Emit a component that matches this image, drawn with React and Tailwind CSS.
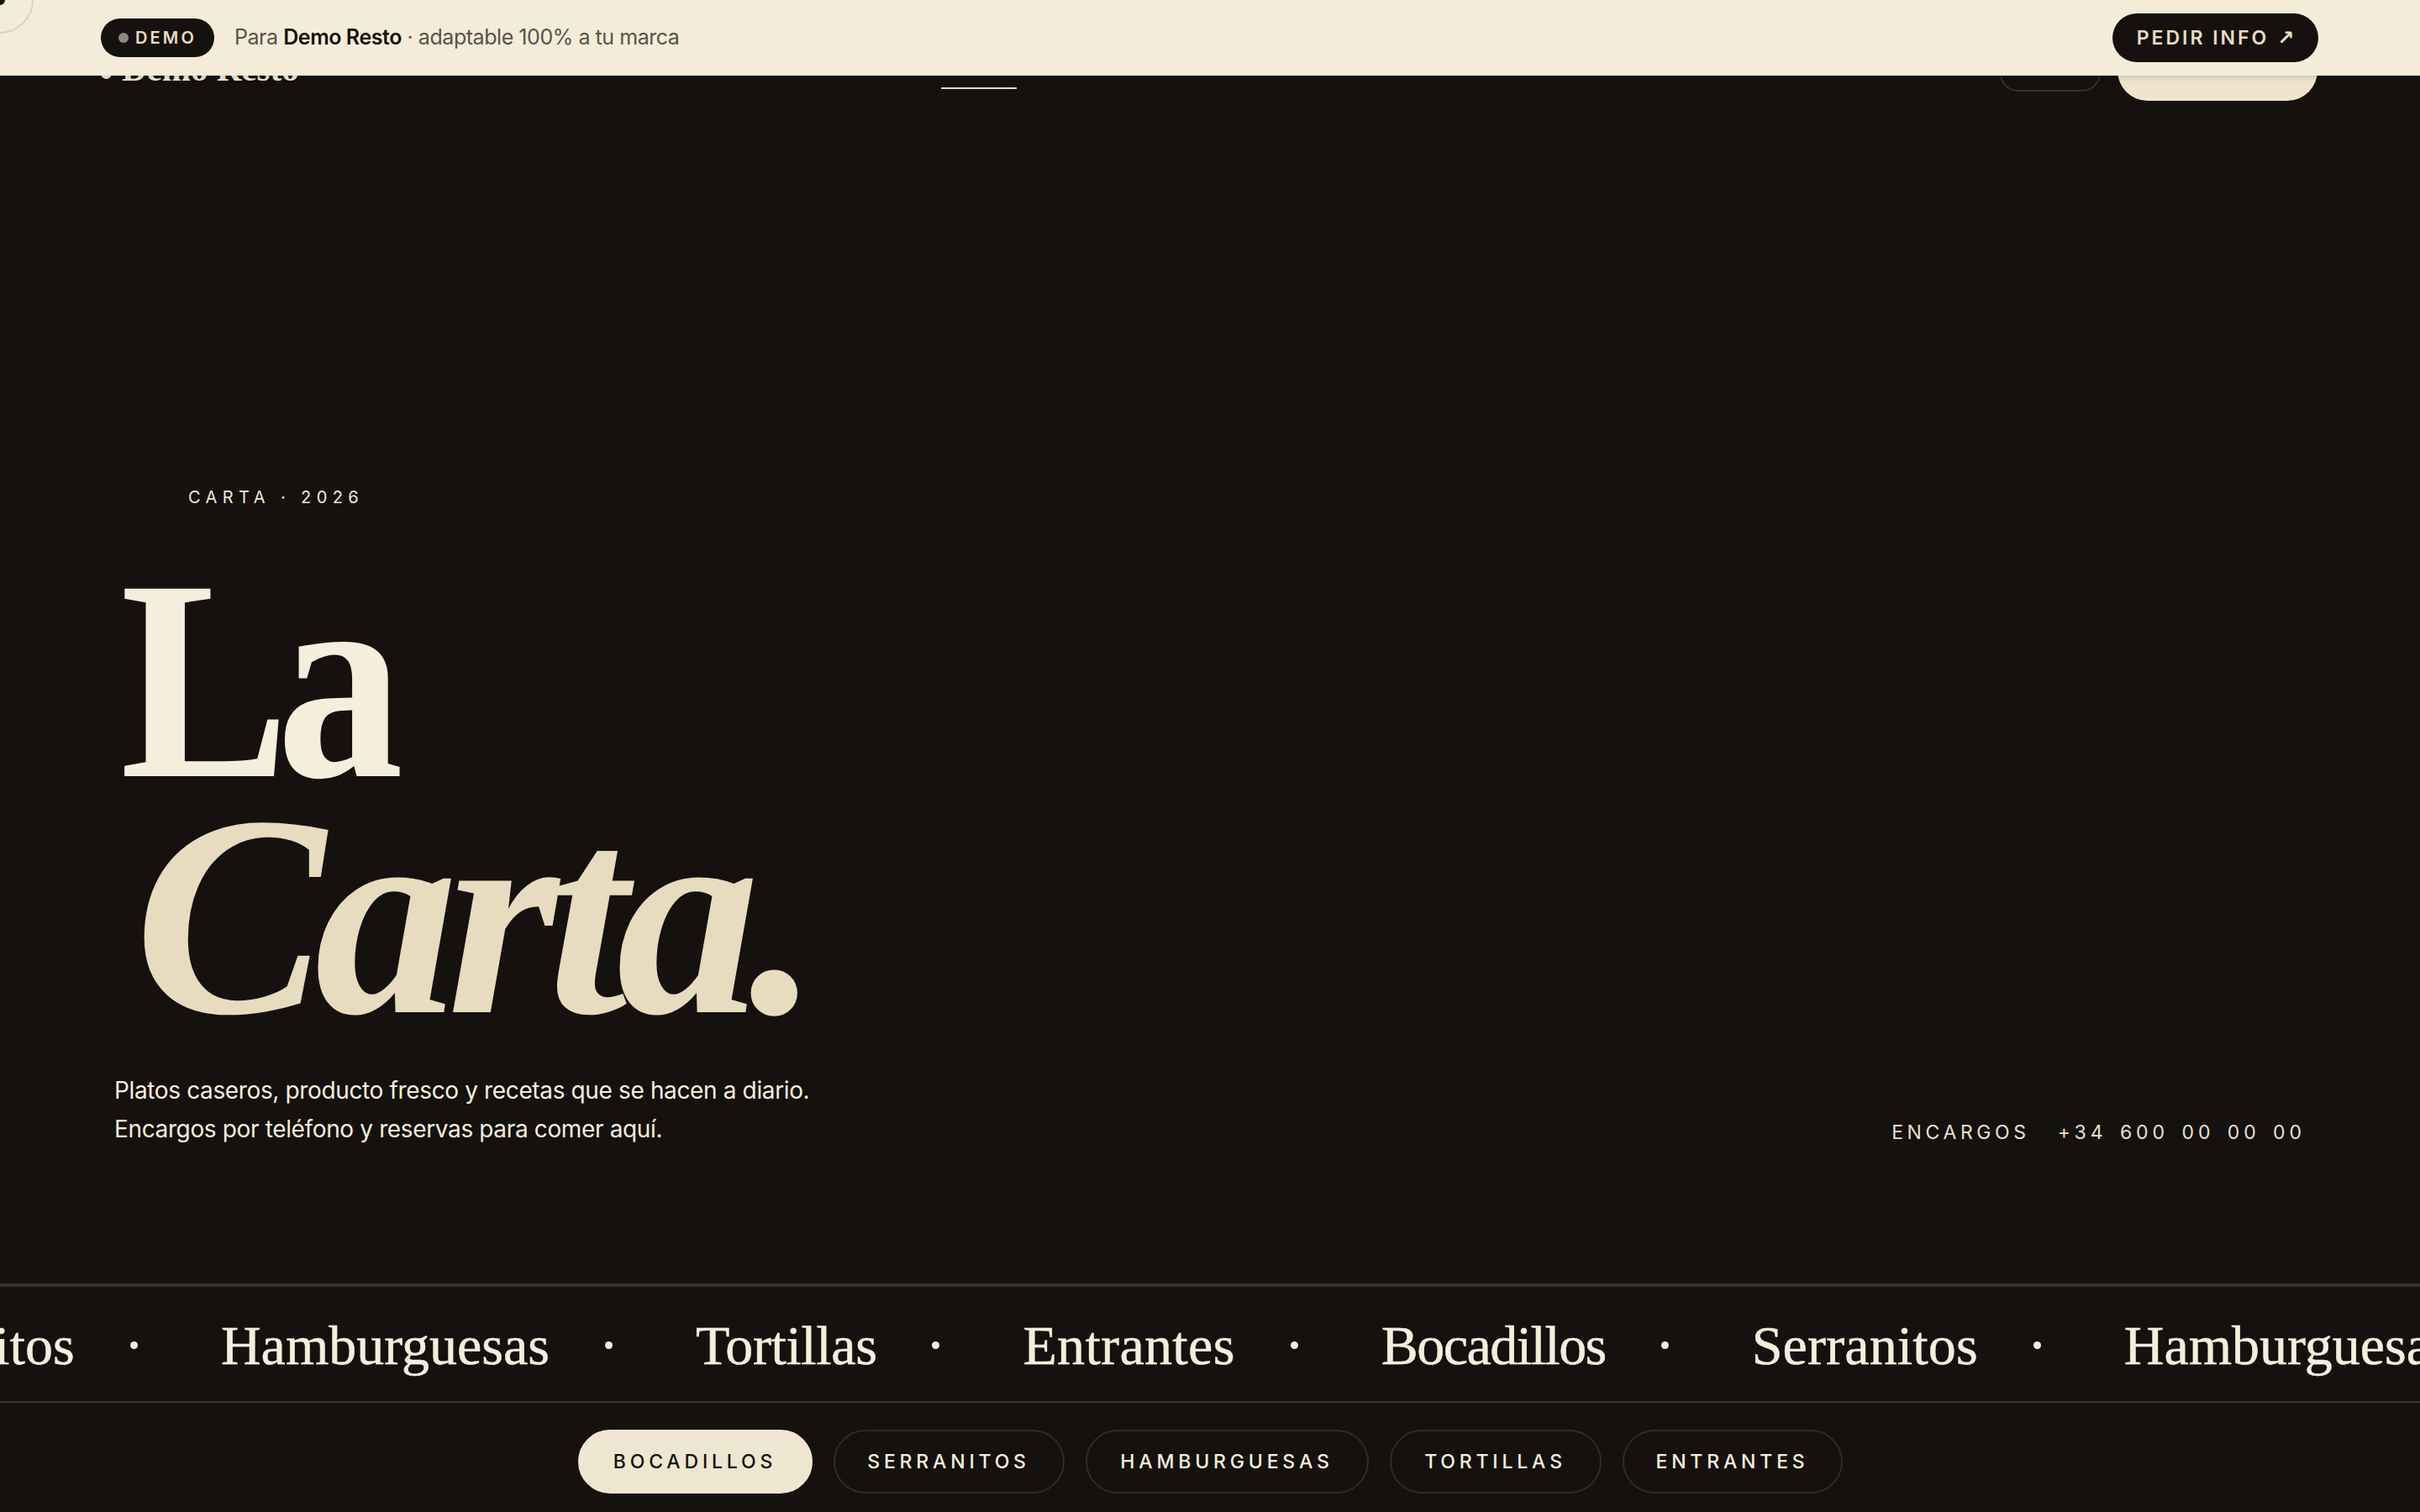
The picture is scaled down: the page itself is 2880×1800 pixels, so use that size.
import React from "react";

const sans = "font-['Inter',sans-serif]";
const serif = "font-['Liberation_Serif',serif]";

const navLinks = [
  { label: "HOY", active: false, box: "w-[32px]" },
  { label: "CARTA", active: true, box: "w-[90px]" },
  { label: "VINOS", active: false, box: "w-[104px]" },
  { label: "RESERVA", active: false, box: "w-[108px]" },
  { label: "CONTACTO", active: false, box: "w-[120px]" },
];

const marqueeWords = [
  { word: "Serranitos", fit: "tracking-[0.002em]" },
  { word: "Hamburguesas", fit: "tracking-normal" },
  { word: "Tortillas", fit: "-tracking-[0.006em]" },
  { word: "Entrantes", fit: "tracking-[0.005em]" },
  { word: "Bocadillos", fit: "-tracking-[0.023em]" },
  { word: "Serranitos", fit: "tracking-[0.002em]" },
  { word: "Hamburguesas", fit: "tracking-normal" },
];

const tabs = [
  { label: "BOCADILLOS", box: "w-[279px]", active: true },
  { label: "SERRANITOS", box: "w-[275px]" },
  { label: "HAMBURGUESAS", box: "w-[337px]" },
  { label: "TORTILLAS", box: "w-[252px]" },
  { label: "ENTRANTES", box: "w-[262px]" },
];

const DemoBar = () => (
  <div className="absolute top-0 left-0 z-10 flex h-[90px] w-full items-center justify-between bg-[#f4ecd9] pl-[120px] pr-[121px] shadow-[0_2px_8px_rgba(0,0,0,0.18)]">
    <div className="flex items-center gap-[24px]">
      <span className="flex h-[46px] w-[135px] items-center justify-center gap-[8px] rounded-[23px] bg-[#15110e]">
        <span className="h-[12px] w-[12px] rounded-full bg-[#8f8a7e]" />
        <span className={`${sans} text-[20px] font-semibold tracking-[0.16em] text-[#e8dcc2]`}>DEMO</span>
      </span>
      <p className={`${sans} text-[25px] tracking-[-0.018em] text-[#57524b]`}>
        Para <strong className="font-semibold text-[#15110e]">Demo Resto</strong> · adaptable 100% a tu marca
      </p>
    </div>
    <button className={`${sans} flex h-[58px] w-[245px] items-center justify-center gap-[10px] rounded-[29px] bg-[#15110e] text-[23px] font-semibold tracking-[0.13em] text-[#e8dcc2]`}>
      PEDIR INFO <span className="font-['DejaVu_Sans',sans-serif] text-[24px] tracking-normal">↗</span>
    </button>
  </div>
);

const Header = () => (
  <header className="flex h-[158px] shrink-0 items-center pl-[120px] pr-[122px]">
    <a className={`${serif} flex items-center gap-[12px] text-[41px] font-bold leading-none text-[#f5eedd]`}>
      <span className="mt-[16px] h-[13px] w-[13px] rounded-full bg-[#f5eedd]" />
      <span className="mt-[6px]">Demo Resto</span>
    </a>
    <nav className={`${sans} ml-[664px] flex gap-[68px] text-[21px] tracking-[0.02em] text-[#d8cfbc]`}>
      {navLinks.map((link) => (
        <a key={link.label} className={`${link.box} relative mt-[8px] whitespace-nowrap`}>
          {link.label}
          {link.active && <span className="absolute -bottom-[7px] left-0 h-[2px] w-full bg-[#e8dcc2]" />}
        </a>
      ))}
    </nav>
    <div className="ml-auto flex items-center gap-[20px]">
      <button className="h-[60px] w-[120px] rounded-[22px] border-2 border-[#35322c]" />
      <button className={`${sans} h-[82px] w-[238px] rounded-[36px] bg-[#efe5cf] pt-[8px] text-[21px] tracking-[0.1em] text-[#15110e]`}>
        PEDIR
      </button>
    </div>
  </header>
);

const Hero = () => (
  <section className="flex flex-1 flex-col justify-end px-[136px] pb-[161px]">
    <p className={`${sans} ml-[88px] text-[20px] tracking-[0.32em] text-[#f0eadb]`}>CARTA · 2026</p>
    <h1 className={`${serif} mt-[62px] -ml-[2px] text-[341px] font-bold leading-[281px] tracking-[-0.05em]`}>
      <span className="ml-[9px] block origin-left scale-x-[0.885] text-[#f5eedd]">La</span>
      <em className="ml-[26px] block tracking-[-0.038em] text-[#e7dbc0]">Carta.</em>
    </h1>
    <div className="mt-[44px] flex items-end justify-between">
      <p className={`${sans} text-[28px] leading-[46px] tracking-[-0.013em] text-[#f5eedd]`}>
        Platos caseros, producto fresco y recetas que se hacen a diario.
        <br />
        Encargos por teléfono y reservas para comer aquí.
      </p>
      <p className={`${sans} -mb-[4px] flex gap-[33px] text-[23px] leading-[46px] tracking-[0.2em] text-[#e8e0ce]`}>
        <span>ENCARGOS</span>
        <span className="tracking-[0.215em] [word-spacing:4px]">+34 600 00 00 00</span>
      </p>
    </div>
  </section>
);

const Marquee = () => (
  <div className="flex h-[142px] shrink-0 items-center overflow-hidden border-t-4 border-b-2 border-t-[#37342c] border-b-[#37342c]">
    <div className={`${serif} -ml-[180px] mt-[3px] flex items-center whitespace-nowrap text-[66px] leading-none text-[#f5eedd] [-webkit-text-stroke:0.5px_#f5eedd]`}>
      {marqueeWords.map((item, i) => (
        <React.Fragment key={i}>
          <span className={item.fit}>{item.word}</span>
          <span className="ml-[66px] mr-[99px] h-[9px] w-[9px] rounded-full bg-[#f5eedd]" />
        </React.Fragment>
      ))}
    </div>
  </div>
);

const Tabs = () => (
  <div className="flex h-[130px] shrink-0 justify-center gap-[25px] pt-[32px]">
    {tabs.map((tab) => (
      <button
        key={tab.label}
        className={`${tab.box} ${sans} h-[76px] rounded-[38px] border-2 text-[23px] font-medium tracking-[0.21em] ${
          tab.active
            ? "border-[#efe6d2] bg-[#efe6d2] text-[#15110e]"
            : "border-[#2f2c27] text-[#f5eedd]"
        }`}
      >
        {tab.label}
      </button>
    ))}
  </div>
);

export default function App() {
  return (
    <div className="relative flex h-[1800px] w-full flex-col overflow-hidden bg-[#15110e]">
      <DemoBar />
      {/* cursor ring sitting in the page corner */}
      <div className="absolute -top-[40px] -left-[40px] z-20 h-[80px] w-[80px] rounded-full border-2 border-[#d9d2c1]" />
      <div className="absolute -top-[6px] -left-[6px] z-20 h-[12px] w-[12px] rounded-full bg-[#15110e]" />
      <Header />
      <Hero />
      <Marquee />
      <Tabs />
    </div>
  );
}
